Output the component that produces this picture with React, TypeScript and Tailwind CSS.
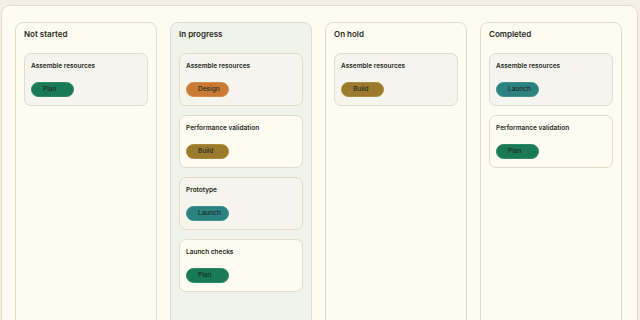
const tagStyles: Record<string, string> = {
  Plan: 'bg-[#197a56] border-[#2e8a66]',
  Design: 'bg-[#c97a35] border-[#d68d4c]',
  Build: 'bg-[#9b7a2b] border-[#ab8a3e]',
  Launch: 'bg-[#2c8181] border-[#3f9090]',
};

type Task = { title: string; tag: string };

const columns: { name: string; active?: boolean; tasks: Task[] }[] = [
  { name: 'Not started', tasks: [{ title: 'Assemble resources', tag: 'Plan' }] },
  {
    name: 'In progress',
    active: true,
    tasks: [
      { title: 'Assemble resources', tag: 'Design' },
      { title: 'Performance validation', tag: 'Build' },
      { title: 'Prototype', tag: 'Launch' },
      { title: 'Launch checks', tag: 'Plan' },
    ],
  },
  { name: 'On hold', tasks: [{ title: 'Assemble resources', tag: 'Build' }] },
  {
    name: 'Completed',
    tasks: [
      { title: 'Assemble resources', tag: 'Launch' },
      { title: 'Performance validation', tag: 'Plan' },
    ],
  },
];

export default function App() {
  return (
    <main
      className="h-[320px] w-[640px] overflow-hidden bg-[#f4eee3] pt-[5px] pl-[1px] pr-[2px] text-[#262922]"
      style={{ fontFamily: 'Inter, "Noto Sans", sans-serif' }}
    >
      <section className="flex h-[360px] gap-[13px] rounded-[9px] border border-[#e4dbc8] bg-[#fefcf0] pl-[13px] pr-[14px] pt-[16px]">
        {columns.map((col) => (
          <div
            key={col.name}
            className={`flex w-[142px] shrink-0 flex-col rounded-[8px] border border-[#e4dbc8] px-[8px] pt-[6px] ${
              col.active ? 'bg-[#f0f3ea]' : 'bg-[#fefcf0]'
            }`}
          >
            <h2 className="text-[8px] font-semibold leading-[10px]">{col.name}</h2>
            <div className="mt-[14px] flex flex-col gap-[9px]">
              {col.tasks.map((task, index) => (
                <div
                  key={index}
                  className={`flex h-[53px] flex-col rounded-[7px] border border-[#e4dbc8] px-[6px] pt-[8px] ${
                    index % 2 === 0 ? 'bg-[#f5f5ee]' : 'bg-[#fefcf0]'
                  }`}
                >
                  <h3 className="text-[6.5px] font-semibold leading-[9px]">{task.title}</h3>
                  <span
                    className={`mt-[11px] flex h-[15px] w-[43px] items-center rounded-full border pl-[11px] text-[6.5px] font-medium text-[#1d2a22] ${
                      tagStyles[task.tag]
                    }`}
                  >
                    {task.tag}
                  </span>
                </div>
              ))}
            </div>
          </div>
        ))}
      </section>
    </main>
  );
}
